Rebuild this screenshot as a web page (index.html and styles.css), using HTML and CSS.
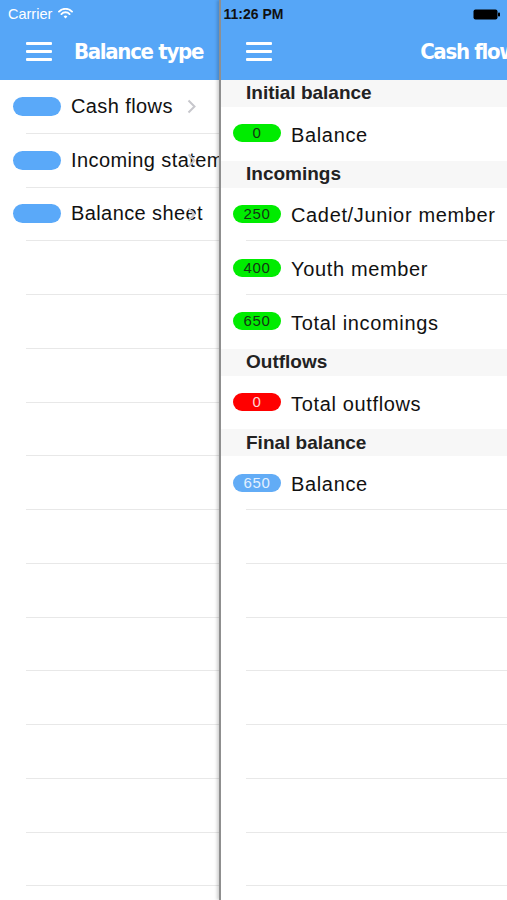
FILE: index.html
```html
<!DOCTYPE html>
<html>
<head>
<meta charset="utf-8">
<link rel="stylesheet" href="styles.css">
</head>
<body>
<div class="screen">
  <div class="status">
    <div class="status-left">
      <span class="carrier">Carrier</span>
      <svg class="wifi" width="15" height="11" viewBox="0 0 15 11">
        <path d="M1 3.6 A9 9 0 0 1 14 3.6" fill="none" stroke="#fff" stroke-width="1.9" stroke-linecap="round"/>
        <path d="M3.4 6.1 A5.6 5.6 0 0 1 11.6 6.1" fill="none" stroke="#fff" stroke-width="1.9" stroke-linecap="round"/>
        <path d="M7.5 10.6 L5.6 8.4 A2.6 2.6 0 0 1 9.4 8.4 Z" fill="#fff"/>
      </svg>
    </div>
    <span class="time">11:26 PM</span>
    <div class="status-right">
      <svg class="battery" width="28" height="11" viewBox="0 0 28 11">
        <rect x="0.5" y="0.5" width="24" height="10" rx="2" fill="#000"/>
        <rect x="25" y="3.5" width="2" height="4" rx="0.8" fill="#000"/>
      </svg>
    </div>
  </div>

  <section class="menu">
    <header class="nav">
      <span class="burger"><i></i><i></i><i></i></span>
      <h1 class="nav-title">Balance type</h1>
    </header>
    <ul class="menu-list">
      <li class="menu-row"><div class="menu-cell"><span class="menu-pill"></span><span class="menu-label">Cash flows</span></div><svg class="chev" width="9" height="15" viewBox="0 0 9 15"><polyline points="1.5,1.5 7.5,7.5 1.5,13.5" fill="none" stroke="#c7c7cc" stroke-width="2"/></svg></li>
      <li class="menu-row"><div class="menu-cell"><span class="menu-pill"></span><span class="menu-label">Incoming statement</span></div><svg class="chev" width="9" height="15" viewBox="0 0 9 15"><polyline points="1.5,1.5 7.5,7.5 1.5,13.5" fill="none" stroke="#c7c7cc" stroke-width="2"/></svg></li>
      <li class="menu-row"><div class="menu-cell"><span class="menu-pill"></span><span class="menu-label">Balance sheet</span></div><svg class="chev" width="9" height="15" viewBox="0 0 9 15"><polyline points="1.5,1.5 7.5,7.5 1.5,13.5" fill="none" stroke="#c7c7cc" stroke-width="2"/></svg></li>
      <li class="menu-row"></li>
      <li class="menu-row"></li>
      <li class="menu-row"></li>
      <li class="menu-row"></li>
      <li class="menu-row"></li>
      <li class="menu-row"></li>
      <li class="menu-row"></li>
      <li class="menu-row"></li>
      <li class="menu-row"></li>
      <li class="menu-row"></li>
      <li class="menu-row"></li>
      <li class="menu-row"></li>
      <li class="menu-row"></li>
    </ul>
  </section>

  <section class="detail">
    <header class="nav nav-detail">
      <span class="burger"><i></i><i></i><i></i></span>
      <h1 class="nav-title">Cash flows</h1>
      <span></span>
    </header>
    <div class="table">
      <div class="sec-head">Initial balance</div>
      <div class="row last"><div class="cell"><span class="pill green">0</span><span class="label">Balance</span></div></div>
      <div class="sec-head">Incomings</div>
      <div class="row"><div class="cell"><span class="pill green">250</span><span class="label">Cadet/Junior member</span></div></div>
      <div class="row"><div class="cell"><span class="pill green">400</span><span class="label">Youth member</span></div></div>
      <div class="row last"><div class="cell"><span class="pill green">650</span><span class="label">Total incomings</span></div></div>
      <div class="sec-head">Outflows</div>
      <div class="row last"><div class="cell"><span class="pill red">0</span><span class="label">Total outflows</span></div></div>
      <div class="sec-head">Final balance</div>
      <div class="row"><div class="cell"><span class="pill blue">650</span><span class="label">Balance</span></div></div>
      <div class="row"></div>
      <div class="row"></div>
      <div class="row"></div>
      <div class="row"></div>
      <div class="row"></div>
      <div class="row"></div>
      <div class="row"></div>
      <div class="row"></div>
    </div>
  </section>
</div>
</body>
</html>
```

FILE: styles.css
```css
* { box-sizing: border-box; }
html, body { margin: 0; padding: 0; background: #fff; }
body { font-family: "Liberation Sans", Arial, sans-serif; color: #111; }

.screen {
  position: relative;
  width: 507px;
  height: 900px;
  overflow: hidden;
  display: flex;
  background: #fff;
}

/* status bar overlay */
.status {
  position: absolute;
  top: 0; left: 0; right: 0;
  height: 28px;
  display: grid;
  grid-template-columns: 1fr auto 1fr;
  align-items: center;
  z-index: 5;
  color: #fff;
}
.status-left { display: flex; align-items: center; gap: 6px; padding-left: 8px; }
.carrier { font-size: 14.5px; color: #fff; }
.wifi { display: block; margin-top: -1px; }
.time { font-size: 14px; font-weight: bold; color: #111; }
.status-right { display: flex; justify-content: flex-end; padding-right: 6px; }
.battery { display: block; }

/* nav bars */
.nav {
  height: 80px;
  background: #56a6f7;
  display: flex;
  align-items: center;
  padding-top: 22px;
}
.burger {
  display: flex;
  flex-direction: column;
  gap: 5px;
  width: 26px;
  flex-shrink: 0;
}
.burger i { display: block; height: 3px; background: #fff; border-radius: 1px; }
.nav-title {
  margin: 0;
  font-family: "DejaVu Sans Condensed", "DejaVu Sans", sans-serif;
  font-stretch: condensed;
  font-weight: bold;
  font-size: 22px;
  letter-spacing: -1.3px;
  color: #fff;
  white-space: nowrap;
}

/* left menu */
.menu {
  width: 219px;
  flex-shrink: 0;
  overflow: hidden;
  background: #fff;
}
.menu .nav { padding-left: 26px; gap: 22px; }
.menu-list { list-style: none; margin: 0; padding: 0; }
.menu-row {
  position: relative;
  height: 53.75px;
  margin-left: 26px;
  border-bottom: 1px solid #e8e8e8;
  display: flex;
  align-items: center;
}
.menu-cell {
  margin-left: -13px;
  display: flex;
  align-items: center;
  gap: 10px;
  white-space: nowrap;
}
.menu-pill {
  width: 48px;
  height: 19px;
  border-radius: 10px;
  background: #5aa9f9;
  flex-shrink: 0;
}
.menu-label { font-size: 20px; letter-spacing: 0.4px; color: #111; }
.chev { position: absolute; left: 161px; top: 19px; }

/* right detail */
.detail {
  width: 507px;
  flex-shrink: 0;
  border-left: 2px solid #8f8f8f;
  box-shadow: -2px 0 3px rgba(0,0,0,0.18);
  background: #fff;
  position: relative;
  z-index: 2;
}
.nav-detail {
  display: grid;
  grid-template-columns: 1fr auto 1fr;
  padding-left: 25px;
  padding-right: 25px;
}
.sec-head {
  height: 26.875px;
  background: #f7f7f7;
  padding-left: 25px;
  display: flex;
  align-items: center;
  font-size: 19px;
  font-weight: bold;
  color: #222;
}
.row {
  height: 53.75px;
  margin-left: 25px;
  border-bottom: 1px solid #e8e8e8;
  display: flex;
  align-items: center;
}
.row.last { border-bottom-color: transparent; }
.cell {
  margin-left: -13px;
  display: flex;
  align-items: center;
  gap: 10px;
  white-space: nowrap;
}
.pill {
  width: 48px;
  height: 18px;
  border-radius: 9px;
  font-size: 15px;
  line-height: 18px;
  text-align: center;
  letter-spacing: 0.6px;
  flex-shrink: 0;
}
.pill.green { background: #00ec00; color: #143314; }
.pill.red { background: #ff0000; color: #ffd6d6; }
.pill.blue { background: #62acf6; color: #e2f0ff; }
.label { font-size: 20px; letter-spacing: 0.65px; color: #111; padding-top: 4px; }
```
